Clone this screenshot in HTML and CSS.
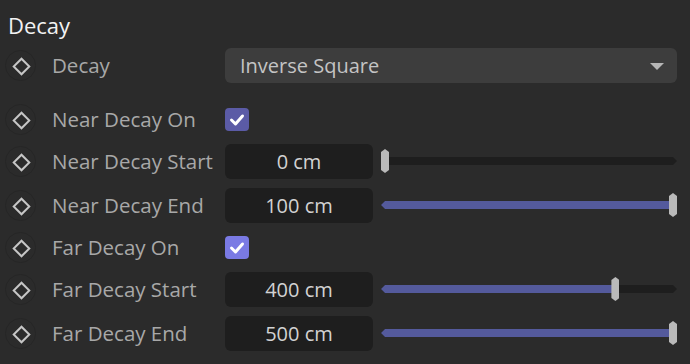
FILE: index.html
```html
<!DOCTYPE html>
<html lang="en">
<head>
    <meta charset="UTF-8">
    <title>Decay</title>
    <link rel="stylesheet" href="styles.css">
</head>
<body>

    <div class="panel">
        <h2 class="panel-title">Decay</h2>

        <!-- Decay mode -->
        <div class="row row-select">
            <div class="key"><span class="diamond"></span></div>
            <div class="label">Decay</div>
            <div class="control">
                <div class="select">
                    <span>Inverse Square</span>
                    <span class="arrow"></span>
                </div>
            </div>
        </div>

        <div class="row row-check">
            <div class="key"><span class="diamond"></span></div>
            <div class="label">Near Decay On</div>
            <div class="control">
                <span class="checkbox">
                    <svg viewBox="0 0 24 23" width="24" height="23"><polyline points="6.5,12 10.5,16 17.5,8" /></svg>
                </span>
            </div>
        </div>

        <div class="row row-value">
            <div class="key"><span class="diamond"></span></div>
            <div class="label">Near Decay Start</div>
            <div class="control">
                <div class="field">0 cm</div>
                <div class="slider" style="--pos: 0">
                    <div class="track"><div class="fill"></div></div>
                    <span class="handle"></span>
                </div>
            </div>
        </div>

        <div class="row row-value">
            <div class="key"><span class="diamond"></span></div>
            <div class="label">Near Decay End</div>
            <div class="control">
                <div class="field">100 cm</div>
                <div class="slider" style="--pos: 1">
                    <div class="track"><div class="fill"></div></div>
                    <span class="handle"></span>
                </div>
            </div>
        </div>

        <div class="row row-check">
            <div class="key"><span class="diamond"></span></div>
            <div class="label">Far Decay On</div>
            <div class="control">
                <span class="checkbox hover">
                    <svg viewBox="0 0 24 23" width="24" height="23"><polyline points="6.5,12 10.5,16 17.5,8" /></svg>
                </span>
            </div>
        </div>

        <div class="row row-value">
            <div class="key"><span class="diamond"></span></div>
            <div class="label">Far Decay Start</div>
            <div class="control">
                <div class="field">400 cm</div>
                <div class="slider" style="--pos: 0.8">
                    <div class="track"><div class="fill"></div></div>
                    <span class="handle"></span>
                </div>
            </div>
        </div>

        <div class="row row-value">
            <div class="key"><span class="diamond"></span></div>
            <div class="label">Far Decay End</div>
            <div class="control">
                <div class="field">500 cm</div>
                <div class="slider" style="--pos: 1">
                    <div class="track"><div class="fill"></div></div>
                    <span class="handle"></span>
                </div>
            </div>
        </div>
    </div>

</body>
</html>
```

FILE: styles.css
```css
/* General */
body {
    margin: 0;
    background-color: #2b2b2b;
    font-family: 'Open Sans', 'Noto Sans', sans-serif;
    color: #a8a8a8;
}

.panel {
    width: 690px;
    height: 364px;
    overflow: hidden;
}

.panel-title {
    margin: 0;
    padding: 10px 0 3px 8px;
    font-size: 22px;
    line-height: 30px;
    font-weight: 400;
    color: #f2f2f2;
}

/* Rows */
.row {
    display: flex;
    align-items: center;
    height: 44px;
    padding-right: 13px;
}

.row-select {
    margin-bottom: 12px;
}

.row-check {
    height: 40px;
}

.key {
    width: 52px;
    display: flex;
    align-items: center;
}

.diamond {
    position: relative;
    width: 31px;
    height: 31px;
    margin-left: 5px;
    border-radius: 50%;
    border: 1px solid #262626;
    box-sizing: border-box;
}

.diamond::after {
    content: '';
    position: absolute;
    left: 9px;
    top: 9px;
    width: 9px;
    height: 9px;
    border: 2px solid #c6c6c6;
    transform: rotate(45deg);
}

.label {
    width: 173px;
    font-size: 20.5px;
    color: #a8a8a8;
    white-space: nowrap;
}

.control {
    flex: 1;
    display: flex;
    align-items: center;
}

/* Dropdown */
.select {
    flex: 1;
    height: 35px;
    background-color: #3d3d3d;
    border-radius: 6px;
    display: flex;
    align-items: center;
    justify-content: space-between;
    padding: 0 13px 0 15px;
    font-size: 20px;
    color: #c4c4c4;
}

.arrow {
    width: 0;
    height: 0;
    border-left: 7px solid transparent;
    border-right: 7px solid transparent;
    border-top: 7px solid #b6b6b6;
    margin-top: 2px;
}

/* Checkbox */
.checkbox {
    width: 24px;
    height: 23px;
    border-radius: 4px;
    background-color: #5b5ba6;
    display: flex;
}

.checkbox.hover {
    background-color: #7a7ae4;
}

.checkbox polyline {
    fill: none;
    stroke: #fff;
    stroke-width: 3;
    stroke-linecap: round;
    stroke-linejoin: round;
}

/* Number field + slider */
.field {
    width: 148px;
    height: 35px;
    border-radius: 6px;
    background-color: #1e1e1e;
    display: flex;
    align-items: center;
    justify-content: center;
    font-size: 20px;
    color: #d2d2d2;
}

.slider {
    position: relative;
    flex: 1;
    height: 24px;
    margin-left: 8px;
    display: flex;
    align-items: center;
}

.track {
    width: 100%;
    height: 8px;
    background-color: #1e1e1e;
    clip-path: polygon(0 50%, 4px 0, calc(100% - 4px) 0, 100% 50%, calc(100% - 4px) 100%, 4px 100%);
}

.fill {
    height: 100%;
    width: calc(var(--pos) * (100% - 8px) + 4px);
    background-color: #545a9c;
}

.handle {
    position: absolute;
    top: 0;
    left: calc(var(--pos) * (100% - 8px));
    width: 8px;
    height: 24px;
    background-color: #bababa;
    clip-path: polygon(0 3px, 4px 0, 100% 3px, 100% calc(100% - 3px), 4px 100%, 0 calc(100% - 3px));
}
```
